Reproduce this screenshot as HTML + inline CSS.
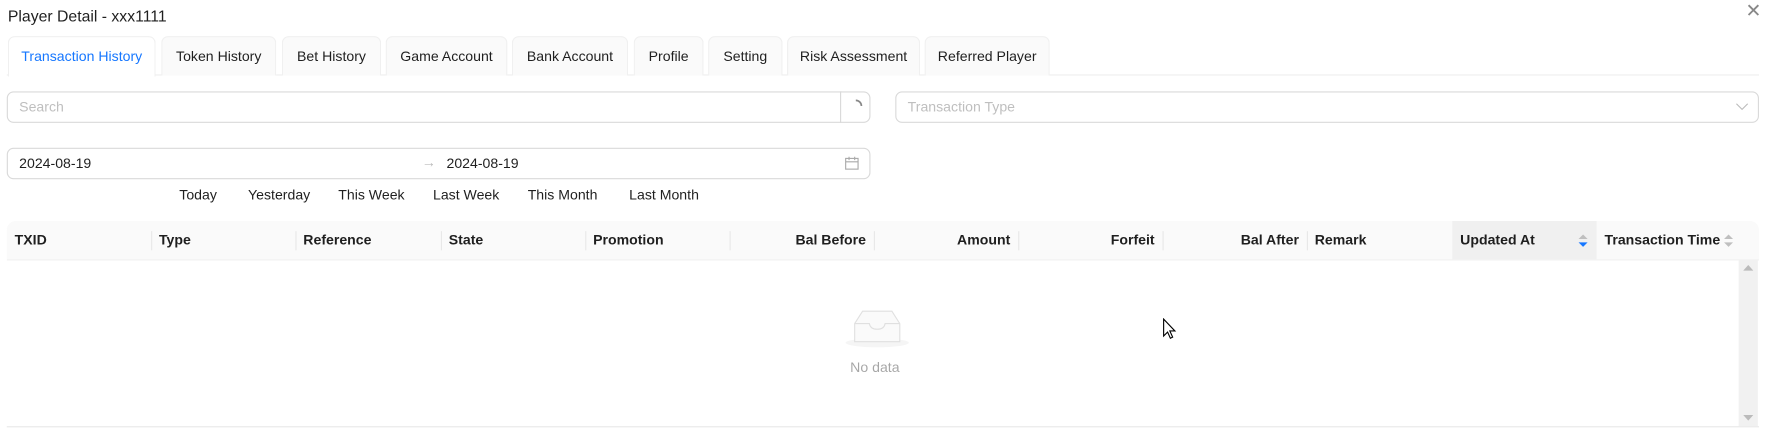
<!DOCTYPE html>
<html><head><style>
*{box-sizing:border-box;margin:0;padding:0}
body{width:1768px;height:444px;background:#fff;font-family:"Liberation Sans",sans-serif;font-size:12.5px;color:rgba(0,0,0,.88);position:relative;overflow:hidden}
#w{position:absolute;left:0;top:0;width:1568px;height:394px;transform:scale(1.12755);transform-origin:0 0}
.a{position:absolute}
.tab{position:absolute;top:32px;height:35px;border:1px solid #f0f0f0;border-bottom:none;background:#fafafa;border-radius:6px 6px 0 0;text-align:center;line-height:34px;color:rgba(0,0,0,.88)}
.inp{position:absolute;border:1px solid #d9d9d9;border-radius:6px;height:28px;line-height:26px;padding-left:10px;color:#bfbfbf}
.th{position:absolute;top:196px;height:35px;line-height:35px;font-weight:bold;padding:0 7px;font-size:12.5px}
.sep{position:absolute;top:205px;height:17px;width:1px;background:#e8e8e8}
</style></head><body><div id="w">
<div class="a" style="left:7px;top:6px;font-size:14px">Player Detail - xxx1111</div>
<div class="a" style="left:1548px;top:0px;font-size:17px;color:#888">✕</div>
<div class="a" style="left:6px;top:66px;width:1554px;height:1px;background:#eee"></div>
<div class="tab" style="left:7px;width:131px;background:#fff;color:#1677ff;height:36px">Transaction History</div>
<div class="tab" style="left:143px;width:102px">Token History</div>
<div class="tab" style="left:250px;width:88px">Bet History</div>
<div class="tab" style="left:342px;width:108px">Game Account</div>
<div class="tab" style="left:454px;width:103px">Bank Account</div>
<div class="tab" style="left:562px;width:62px">Profile</div>
<div class="tab" style="left:628px;width:66px">Setting</div>
<div class="tab" style="left:698px;width:118px">Risk Assessment</div>
<div class="tab" style="left:820px;width:111px">Referred Player</div>

<div class="inp" style="left:6px;top:81px;width:766px">Search</div>
<div class="a" style="left:745px;top:81px;width:1px;height:28px;background:#d9d9d9"></div>
<svg class="a" style="left:752px;top:87px" width="14" height="14"><path d="M7 2 A5 5 0 0 1 12 7" stroke="#888" stroke-width="1.5" fill="none"/></svg>
<div class="inp" style="left:794px;top:81px;width:766px">Transaction Type</div>
<svg class="a" style="left:1539px;top:90px" width="12" height="10"><path d="M1 2 L6 7 L11 2" stroke="#bbb" fill="none"/></svg>

<div class="inp" style="left:6px;top:131px;width:766px;color:rgba(0,0,0,.88)">2024-08-19</div>
<div class="a" style="left:374px;top:137px;color:#bbb">→</div>
<div class="a" style="left:396px;top:138px">2024-08-19</div>
<svg class="a" style="left:749px;top:138px" width="13" height="13"><rect x="1" y="2.5" width="11" height="9.5" fill="none" stroke="#aaa"/><path d="M1 5.5H12M4 1v3M9 1v3" stroke="#aaa"/></svg>
<div class="a" style="left:159px;top:166px">Today</div>
<div class="a" style="left:220px;top:166px">Yesterday</div>
<div class="a" style="left:300px;top:166px">This Week</div>
<div class="a" style="left:384px;top:166px">Last Week</div>
<div class="a" style="left:468px;top:166px">This Month</div>
<div class="a" style="left:558px;top:166px">Last Month</div>

<div class="a" style="left:6px;top:196px;width:1554px;height:35px;background:#fafafa;border-radius:8px 8px 0 0;border-bottom:1px solid #f0f0f0"></div>
<div class="a" style="left:1288px;top:196px;width:128px;height:34px;background:#f0f0f0"></div>
<div class="th" style="left:6px">TXID</div>
<div class="th" style="left:134px">Type</div>
<div class="th" style="left:262px">Reference</div>
<div class="th" style="left:391px">State</div>
<div class="th" style="left:519px">Promotion</div>
<div class="th" style="left:647px;width:128px;text-align:right">Bal Before</div>
<div class="th" style="left:775px;width:128px;text-align:right">Amount</div>
<div class="th" style="left:903px;width:128px;text-align:right">Forfeit</div>
<div class="th" style="left:1031px;width:128px;text-align:right">Bal After</div>
<div class="th" style="left:1159px">Remark</div>
<div class="th" style="left:1288px">Updated At</div>
<div class="th" style="left:1416px">Transaction Time</div>
<div class="sep" style="left:134px"></div><div class="sep" style="left:262px"></div><div class="sep" style="left:391px"></div><div class="sep" style="left:519px"></div><div class="sep" style="left:647px"></div><div class="sep" style="left:775px"></div><div class="sep" style="left:903px"></div><div class="sep" style="left:1031px"></div><div class="sep" style="left:1159px"></div>
<svg class="a" style="left:1399px;top:207px" width="10" height="13"><path d="M5 1L9 5H1Z" fill="#bfbfbf"/><path d="M5 12L9 8H1Z" fill="#1677ff"/></svg>
<svg class="a" style="left:1528px;top:207px" width="10" height="13"><path d="M5 1L9 5H1Z" fill="#bfbfbf"/><path d="M5 12L9 8H1Z" fill="#bfbfbf"/></svg>

<div class="a" style="left:1542px;top:231px;width:17px;height:147px;background:#f1f1f1"></div>
<svg class="a" style="left:1546px;top:235px" width="9" height="6"><path d="M4.5 0L9 5H0Z" fill="#bbb"/></svg>
<svg class="a" style="left:1546px;top:368px" width="9" height="6"><path d="M4.5 5L9 0H0Z" fill="#bbb"/></svg>
<div class="a" style="left:6px;top:378px;width:1554px;height:1px;background:#e8e8e8"></div>

<svg class="a" style="left:748px;top:270px" width="60" height="40"><ellipse cx="30" cy="34" rx="28" ry="4" fill="#f5f5f5"/><path d="M10 17 L17 6 H43 L50 17 V33 H10Z" fill="#fafafa" stroke="#e0e0e0"/><path d="M10 17H23 Q24 22 30 22 Q36 22 37 17H50" fill="none" stroke="#e0e0e0"/></svg>
<div class="a" style="left:754px;top:319px;color:rgba(0,0,0,.35)">No data</div>
<svg class="a" style="left:1031px;top:282px" width="13" height="19"><path d="M1 1V16L4.5 12.5L7 18L9 17L6.5 11.5H11Z" fill="#fff" stroke="#000" stroke-width="1"/></svg>
</div></body></html>
